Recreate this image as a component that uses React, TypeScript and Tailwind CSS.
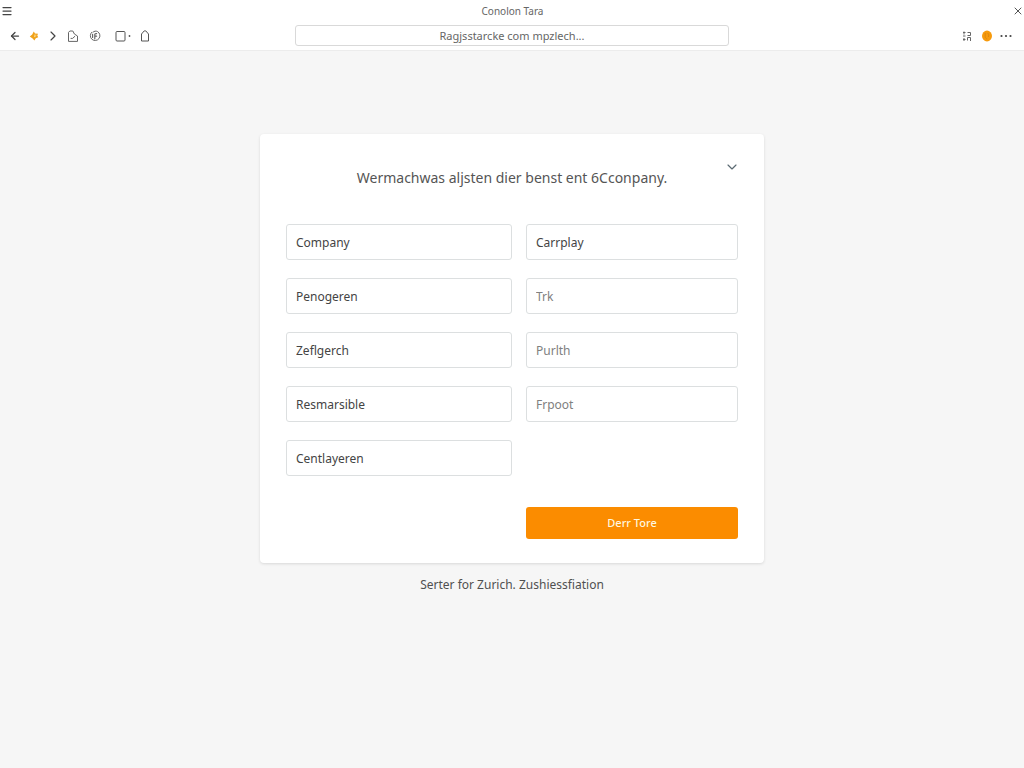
import { useState } from "react";
import type { FormEvent, ReactNode } from "react";
import { ArrowLeft, ChevronDown, ChevronRight, Menu, X } from "lucide-react";

type Field = {
  name: string;
  value?: string;
  placeholder?: string;
};

const leftFields: Field[] = [
  { name: "Company", value: "Company" },
  { name: "Penogeren", value: "Penogeren" },
  { name: "Zeflgerch", value: "Zeflgerch" },
  { name: "Resmarsible", value: "Resmarsible" },
  { name: "Centlayeren", value: "Centlayeren" },
];

const rightFields: Field[] = [
  { name: "Carrplay", value: "Carrplay" },
  { name: "Trk", placeholder: "Trk" },
  { name: "Purlth", placeholder: "Purlth" },
  { name: "Frpoot", placeholder: "Frpoot" },
];

function ToolbarButton({
  label,
  className = "w-[19px]",
  children,
}: {
  label: string;
  className?: string;
  children: ReactNode;
}) {
  return (
    <button
      type="button"
      aria-label={label}
      className={`flex h-5 shrink-0 items-center justify-center ${className}`}
    >
      {children}
    </button>
  );
}

function StarIcon() {
  return (
    <svg viewBox="0 0 10 10" className="h-[10px] w-[10px]">
      <path
        d="M4.8.4 6 2.4 9 2.8 8.3 4.6 9.2 6.2 6.8 7.2 5.4 9.4 3.6 7.4.8 5.4 3.2 3.6Z"
        fill="#f0a21a"
      />
      <path d="M5 4.2h2.4M5 5.6h1.6" stroke="#fbe3a6" strokeWidth="0.8" />
    </svg>
  );
}

function PageIcon() {
  return (
    <svg
      viewBox="0 0 12 12"
      className="h-3 w-3"
      fill="none"
      stroke="#666"
      strokeLinejoin="round"
      strokeLinecap="round"
    >
      <path d="M1.5 11V2.4L2.8 1h3L7.4 4 10.5 6v5Z" />
      <path d="M4 8.4h1.6L7.8 6.4" />
    </svg>
  );
}

function HistoryIcon() {
  return (
    <svg
      viewBox="0 0 12 12"
      className="h-3 w-3"
      fill="none"
      stroke="#666"
      strokeLinecap="round"
    >
      <path d="M2.8 2.2A4.8 4.8 0 1 0 8.6 1.6C7 .8 5.2 1 4 2.2" />
      <path d="M3.6 4.4v3M5.8 8.8V4.6c0-.8.8-1.2 1.8-1M5.8 6.2h1.8" strokeWidth="1.2" />
    </svg>
  );
}

function TabsIcon() {
  return (
    <svg viewBox="0 0 16 12" className="h-3 w-4" fill="none" stroke="#555">
      <rect x="1" y="1.5" width="9" height="9.5" rx="1" />
      <circle cx="14.5" cy="6" r="0.9" fill="#555" stroke="none" />
    </svg>
  );
}

function TagIcon() {
  return (
    <svg
      viewBox="0 0 10 12"
      className="h-3 w-[10px]"
      fill="none"
      stroke="#555"
      strokeLinejoin="round"
    >
      <path d="M1.5 4 4.2.9h1.6L8.5 4v7h-7Z" />
    </svg>
  );
}

function AppsIcon() {
  return (
    <svg viewBox="0 0 10 10" className="h-[10px] w-[10px]" fill="none" stroke="#666">
      <path d="M1 1.5h2.5M1 5h2.5M1 8.5h2.5M2 .5v3M2 7v3M5.5 1.5h3v3h-3M5.5 9.5v-3h3M8.5 6.5v3.5" />
    </svg>
  );
}

function ProfileIcon() {
  return (
    <svg viewBox="0 0 12 12" className="h-3 w-3">
      <ellipse cx="6" cy="6" rx="5" ry="5.4" fill="#f79a0c" />
      <path
        d="M4.2 3v3.6c0 1.2.8 2.2 2 2.4M6.6 3c1 .8 1.4 2.4.8 4"
        fill="none"
        stroke="#d6830f"
        strokeWidth="0.8"
      />
    </svg>
  );
}

function MoreIcon() {
  return (
    <svg viewBox="0 0 14 4" className="h-1 w-[14px]" fill="#444">
      <circle cx="2.5" cy="2" r="1.1" />
      <circle cx="7" cy="2" r="1.1" />
      <circle cx="11.5" cy="2" r="1.1" />
    </svg>
  );
}

function BrowserHeader() {
  return (
    <header className="border-b border-[#ececec] bg-white pb-1 text-[#666]">
      <div className="flex h-[22px] items-center justify-between">
        <button type="button" aria-label="Menu" className="pl-px">
          <Menu className="h-3 w-3 text-[#444]" strokeWidth={2.5} />
        </button>
        <span className="text-[10px] leading-4">Conolon Tara</span>
        <button type="button" aria-label="Close">
          <X className="h-3 w-3 text-[#555]" strokeWidth={2} />
        </button>
      </div>

      <div className="grid grid-cols-[minmax(0,1fr)_minmax(0,434px)_minmax(0,1fr)] items-center pt-[3px]">
        <nav aria-label="Navigation" className="flex items-center pl-[5px]">
          <ToolbarButton label="Back">
            <ArrowLeft className="h-3 w-3 text-[#444]" strokeWidth={2.5} />
          </ToolbarButton>
          <ToolbarButton label="Favourite">
            <StarIcon />
          </ToolbarButton>
          <ToolbarButton label="Forward">
            <ChevronRight className="h-4 w-4 text-[#444]" strokeWidth={1.75} />
          </ToolbarButton>
          <ToolbarButton label="Page" className="w-[22px]">
            <PageIcon />
          </ToolbarButton>
          <ToolbarButton label="History" className="w-[22px]">
            <HistoryIcon />
          </ToolbarButton>
          <ToolbarButton label="Tabs" className="w-[34px]">
            <TabsIcon />
          </ToolbarButton>
          <ToolbarButton label="Tag" className="w-[10px]">
            <TagIcon />
          </ToolbarButton>
        </nav>
        <input
          type="text"
          aria-label="Address"
          defaultValue="Ragjsstarcke com mpzlech..."
          className="h-[21px] w-full rounded-[3px] border border-[#d9d9d9] bg-white text-center text-[11px] leading-4 outline-none"
        />
        <div className="flex items-center justify-end pr-2">
          <ToolbarButton label="Apps" className="w-5">
            <AppsIcon />
          </ToolbarButton>
          <ToolbarButton label="Profile">
            <ProfileIcon />
          </ToolbarButton>
          <ToolbarButton label="More" className="w-5">
            <MoreIcon />
          </ToolbarButton>
        </div>
      </div>
    </header>
  );
}

function TextField({ field }: { field: Field }) {
  return (
    <input
      type="text"
      aria-label={field.name}
      defaultValue={field.value}
      placeholder={field.placeholder}
      className="h-9 w-full rounded-[3px] border border-[#dcdfe0] bg-white px-[9px] text-xs text-[#444] outline-none placeholder:text-[#808080] focus:border-[#fb8c00]"
    />
  );
}

export default function App() {
  const [isOpen, setIsOpen] = useState(true);

  function handleSubmit(event: FormEvent) {
    event.preventDefault();
  }

  return (
    <div className="flex min-h-screen flex-col bg-[#f6f6f6] font-['Noto_Sans','Open_Sans',sans-serif]">
      <BrowserHeader />

      <main className="flex flex-1 flex-col items-center pt-[83px]">
        <form
          onSubmit={handleSubmit}
          className="w-full max-w-[504px] rounded bg-white px-[26px] pt-[25px] pb-6 shadow-[0_1px_3px_rgba(0,0,0,0.12)]"
        >
          <div className="flex justify-end">
            <button
              type="button"
              aria-label="Toggle form"
              aria-expanded={isOpen}
              onClick={() => setIsOpen(!isOpen)}
              className="-mr-0.5"
            >
              <ChevronDown className="h-4 w-4 text-[#5b6a72]" strokeWidth={1.75} />
            </button>
          </div>
          <h1 className="-mt-[9px] text-center text-sm leading-6 text-[#555]">
            Wermachwas aljsten dier benst ent 6Cconpany.
          </h1>

          {isOpen && (
            <>
              <div className="mt-[34px] grid grid-cols-[226fr_212fr] gap-x-[14px]">
                <div className="flex flex-col gap-[18px]">
                  {leftFields.map((field) => (
                    <TextField key={field.name} field={field} />
                  ))}
                </div>
                <div className="flex flex-col gap-[18px]">
                  {rightFields.map((field) => (
                    <TextField key={field.name} field={field} />
                  ))}
                </div>
              </div>

              <div className="mt-[31px] grid grid-cols-[226fr_212fr] gap-x-[14px]">
                <button
                  type="submit"
                  className="col-start-2 h-8 rounded-[3px] bg-[#fb8c00] text-[11px] font-medium text-[#fff6df]"
                >
                  Derr Tore
                </button>
              </div>
            </>
          )}
        </form>

        <p className="mt-3 text-xs leading-5 text-[#505050]">
          Serter for Zurich. Zushiessfiation
        </p>
      </main>
    </div>
  );
}
